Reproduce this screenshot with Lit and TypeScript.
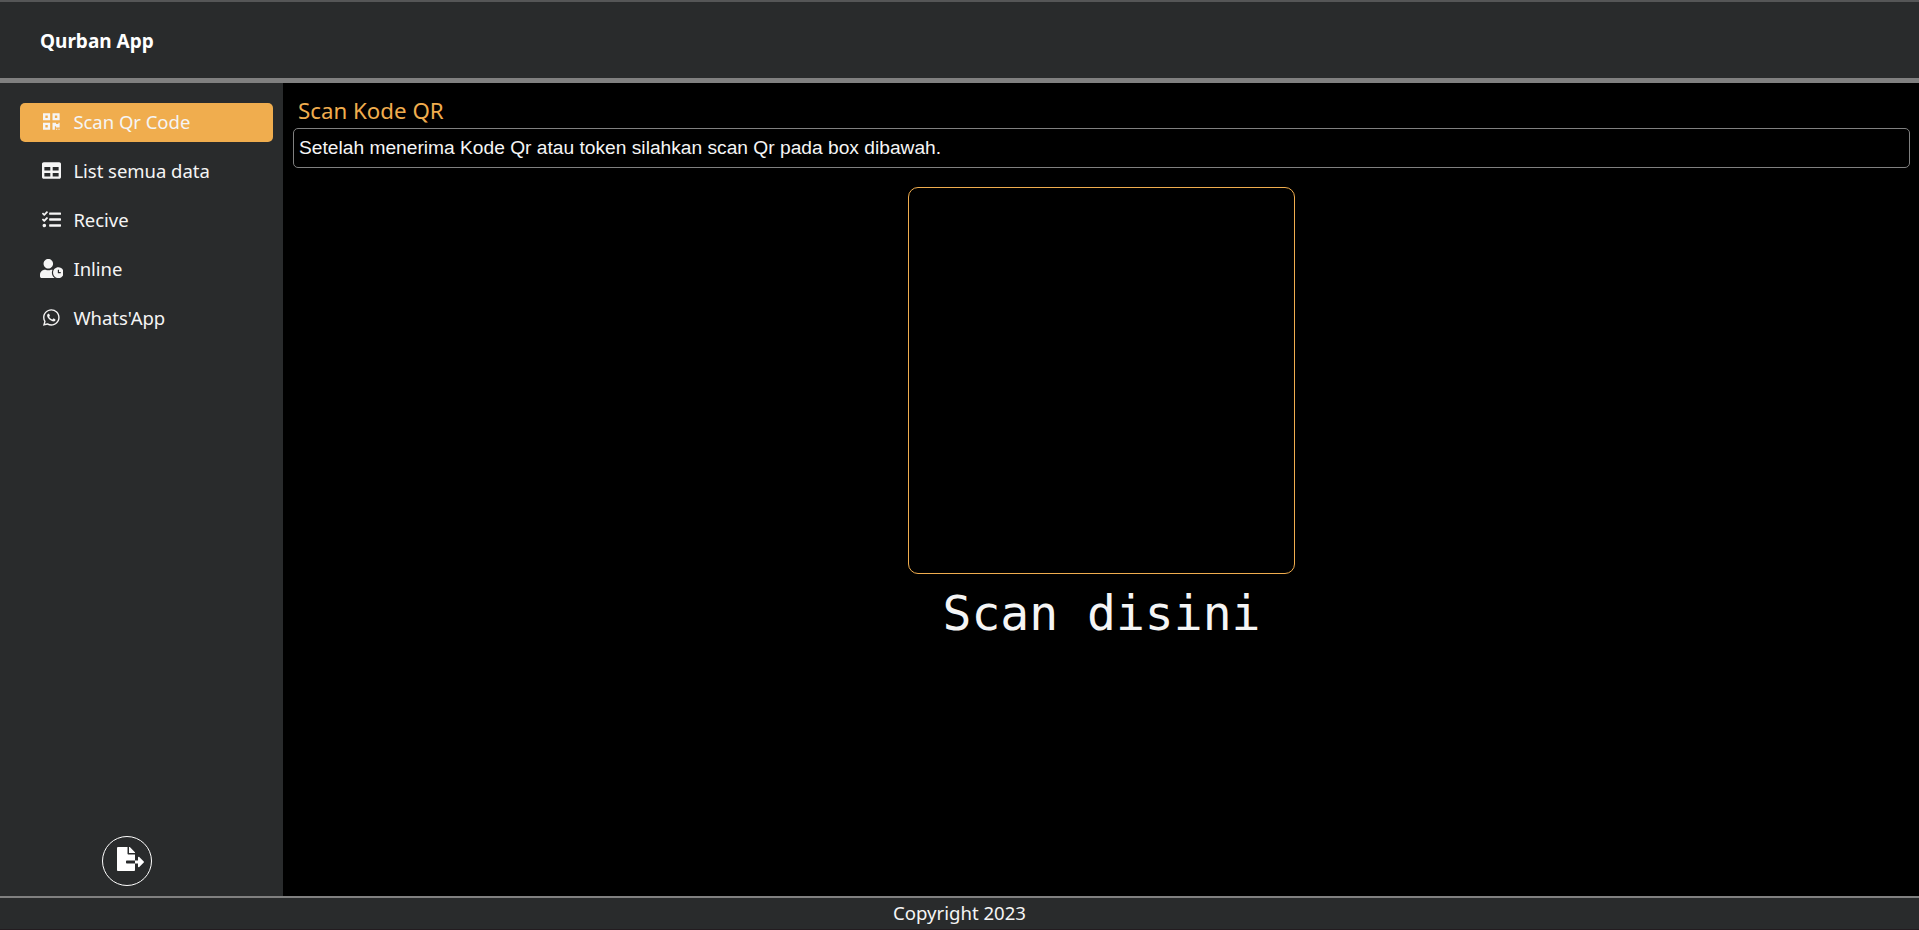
import { LitElement, html, css, svg } from "lit";
import { customElement, state } from "lit/decorators.js";
import { classMap } from "lit/directives/class-map.js";

interface NavItem {
  label: string;
  width: number;
  path: string;
}

const NAV: NavItem[] = [
  {
    label: "Scan Qr Code",
    width: 448,
    path: "M0 224h192V32H0v192zM64 96h64v64H64V96zm192-64v192h192V32H256zm128 128h-64V96h64v64zM0 480h192V288H0v192zm64-128h64v64H64v-64zm352-64h32v128h-96v-32h-32v96h-64V288h96v32h64v-32zm0 160h32v32h-32v-32zm-64 0h32v32h-32v-32z",
  },
  {
    label: "List semua data",
    width: 512,
    path: "M464 32H48C21.49 32 0 53.49 0 80v352c0 26.51 21.49 48 48 48h416c26.51 0 48-21.49 48-48V80c0-26.51-21.49-48-48-48zM224 416H64v-96h160v96zm0-160H64v-96h160v96zm224 160H288v-96h160v96zm0-160H288v-96h160v96z",
  },
  {
    label: "Recive",
    width: 512,
    path: "M139.61 35.5a12 12 0 0 0-17 0L58.93 98.81l-22.7-22.12a12 12 0 0 0-17 0L3.53 92.41a12 12 0 0 0 0 17l47.59 47.4a12.78 12.78 0 0 0 17.61 0l15.59-15.62L156.52 69a12.09 12.09 0 0 0 .09-17zm0 159.19a12 12 0 0 0-17 0l-63.68 63.72-22.7-22.1a12 12 0 0 0-17 0L3.53 252a12 12 0 0 0 0 17L51 316.5a12.77 12.77 0 0 0 17.6 0l15.7-15.69 72.2-72.22a12 12 0 0 0 .09-16.9zM64 368c-26.49 0-48.59 21.5-48.59 48S37.53 464 64 464a48 48 0 0 0 0-96zm432 16H208a16 16 0 0 0-16 16v32a16 16 0 0 0 16 16h288a16 16 0 0 0 16-16v-32a16 16 0 0 0-16-16zm0-320H208a16 16 0 0 0-16 16v32a16 16 0 0 0 16 16h288a16 16 0 0 0 16-16V80a16 16 0 0 0-16-16zm0 160H208a16 16 0 0 0-16 16v32a16 16 0 0 0 16 16h288a16 16 0 0 0 16-16v-32a16 16 0 0 0-16-16z",
  },
  {
    label: "Inline",
    width: 640,
    path: "M496 224c-79.6 0-144 64.4-144 144s64.4 144 144 144 144-64.4 144-144-64.4-144-144-144zm64 150.3c0 5.3-4.4 9.7-9.7 9.7h-60.6c-5.3 0-9.7-4.4-9.7-9.7v-76.6c0-5.3 4.4-9.7 9.7-9.7h12.6c5.3 0 9.7 4.4 9.7 9.7V352h38.3c5.3 0 9.7 4.4 9.7 9.7v12.6zM320 368c0-27.8 6.7-54.1 18.2-77.5-8-1.5-16.2-2.5-24.6-2.5h-16.7c-22.2 10.2-46.9 16-72.9 16s-50.6-5.8-72.9-16h-16.7C60.2 288 0 348.2 0 422.4V464c0 26.5 21.5 48 48 48h347.1c-45.3-31.9-75.1-84.5-75.1-144zm-96-112c70.7 0 128-57.3 128-128S294.7 0 224 0 96 57.3 96 128s57.3 128 128 128z",
  },
  {
    label: "Whats'App",
    width: 448,
    path: "M380.9 97.1C339 55.1 283.2 32 223.9 32c-122.4 0-222 99.6-222 222 0 39.1 10.2 77.3 29.6 111L0 480l117.7-30.9c32.4 17.7 68.9 27 106.1 27h.1c122.3 0 224.1-99.6 224.1-222 0-59.3-25.2-115-67.1-157zm-157 341.6c-33.2 0-65.7-8.9-94-25.7l-6.7-4-69.8 18.3L72 359.2l-4.4-7c-18.5-29.4-28.2-63.3-28.2-98.2 0-101.7 82.8-184.5 184.6-184.5 49.3 0 95.6 19.2 130.4 54.1 34.8 34.9 56.2 81.2 56.1 130.5 0 101.8-84.9 184.6-186.6 184.6zm101.2-138.2c-5.5-2.8-32.8-16.2-37.9-18-5.1-1.9-8.8-2.8-12.5 2.8-3.7 5.6-14.3 18-17.6 21.8-3.2 3.7-6.5 4.2-12 1.4-32.6-16.3-54-29.1-75.5-66-5.7-9.8 5.7-9.1 16.3-30.3 1.8-3.7.9-6.9-.5-9.7-1.4-2.8-12.5-30.1-17.1-41.2-4.5-10.8-9.1-9.3-12.5-9.5-3.2-.2-6.9-.2-10.6-.2-3.7 0-9.7 1.4-14.8 6.9-5.1 5.6-19.4 19-19.4 46.3 0 27.3 19.9 53.7 22.6 57.4 2.8 3.7 39.1 59.7 94.8 83.8 35.2 15.2 49 16.5 66.6 13.9 10.7-1.6 32.8-13.4 37.4-26.4 4.6-13 4.6-24.1 3.2-26.4-1.3-2.5-5-3.9-10.5-6.6z",
  },
];

const EXPORT_ICON =
  "M384 121.9c0-6.3-2.5-12.4-7-16.9L279.1 7c-4.5-4.5-10.6-7-17-7H256v128h128zM571 308l-95.7-96.4c-10.1-10.1-27.4-3-27.4 11.3V288h-64v64h64v65.2c0 14.3 17.3 21.4 27.4 11.3L571 332c6.6-6.6 6.6-17.4 0-24zm-379 28v-32c0-8.8 7.2-16 16-16h176V160H248c-13.2 0-24-10.8-24-24V0H24C10.7 0 0 10.7 0 24v464c0 13.3 10.7 24 24 24h336c13.3 0 24-10.7 24-24V352H208c-8.8 0-16-7.2-16-16z";

@customElement("nav-menu")
export class NavMenu extends LitElement {
  @state() private active = 0;

  static styles = css`
    :host {
      display: flex;
      flex-direction: column;
      gap: 10px;
    }
    .item {
      display: flex;
      align-items: center;
      box-sizing: border-box;
      height: 39px;
      padding: 0 19.4px;
      border-radius: 5px;
      color: #f5f5f5;
      cursor: pointer;
    }
    .item.active {
      background: #f0ad4e;
    }
    .icon {
      display: flex;
      justify-content: center;
      width: 24px;
      margin-right: 10px;
      padding-bottom: 2px;
    }
    .icon svg {
      display: block;
      flex: none;
      height: 19px;
      fill: currentColor;
    }
    .label {
      padding-bottom: 1px;
      font-size: 18.5px;
      letter-spacing: -0.03px;
      line-height: 26px;
      white-space: nowrap;
    }
  `;

  render() {
    return NAV.map(
      (item, i) => html`
        <a
          class=${classMap({ item: true, active: i === this.active })}
          @click=${() => (this.active = i)}
        >
          <span class="icon">
            <svg viewBox="0 0 ${item.width} 512">${svg`<path d=${item.path}></path>`}</svg>
          </span>
          <span class="label">${item.label}</span>
        </a>
      `
    );
  }
}

@customElement("app-root")
export class AppRoot extends LitElement {
  static styles = css`
    :host {
      display: grid;
      grid-template-rows: 83px 1fr 34px;
      box-sizing: border-box;
      height: 930px;
      background: #000;
      color: #f5f5f5;
      font-family: "Noto Sans", sans-serif;
    }
    header {
      display: flex;
      align-items: center;
      box-sizing: border-box;
      padding: 2px 0 0 40px;
      background: #292b2c;
      border-top: 2px solid #555657;
      border-bottom: 5px solid #808080;
    }
    .brand {
      color: #fff;
      font-size: 19px;
      font-weight: 700;
      line-height: 26px;
    }
    .body {
      display: grid;
      grid-template-columns: 283px 1fr;
      min-height: 0;
    }
    aside {
      display: flex;
      flex-direction: column;
      justify-content: space-between;
      box-sizing: border-box;
      padding: 20px 10px 10px 20px;
      background: #292b2c;
    }
    .logout {
      display: flex;
      align-items: center;
      justify-content: center;
      box-sizing: border-box;
      width: 50px;
      height: 50px;
      margin-left: 82px;
      padding: 0 0 4px 6px;
      border: 1px solid #fff;
      border-radius: 50%;
      background: none;
      color: #fff;
    }
    .logout svg {
      flex: none;
      display: block;
      width: 27px;
      height: 24px;
      fill: currentColor;
    }
    main {
      display: flex;
      flex-direction: column;
      box-sizing: border-box;
      padding: 12px 9px 0 10px;
    }
    h1 {
      margin: 0;
      padding-left: 5px;
      height: 33px;
      color: #f0ad4e;
      font-size: 22.3px;
      font-weight: 400;
      line-height: 31px;
    }
    .note {
      box-sizing: border-box;
      height: 40px;
      padding-left: 5px;
      border: 1px solid #808080;
      border-radius: 5px;
      font: 19.2px/38px "Liberation Sans", Arial, sans-serif;
    }
    .scanner {
      align-self: center;
      box-sizing: border-box;
      width: 387px;
      height: 387px;
      margin-top: 19px;
      border: 1px solid #f0ad4e;
      border-radius: 10px;
    }
    .caption {
      margin-top: 11px;
      text-align: center;
      font: 48px/56px "DejaVu Sans Mono", monospace;
    }
    footer {
      box-sizing: border-box;
      background: #292b2c;
      border-top: 2px solid #808080;
      border-bottom: 1px solid #231c20;
      text-align: center;
      font-size: 18.6px;
      line-height: 29px;
    }
  `;

  render() {
    return html`
      <header><span class="brand">Qurban App</span></header>
      <div class="body">
        <aside>
          <nav-menu></nav-menu>
          <button class="logout" aria-label="Logout">
            <svg viewBox="0 0 576 512"><path d=${EXPORT_ICON}></path></svg>
          </button>
        </aside>
        <main>
          <h1>Scan Kode QR</h1>
          <div class="note">
            Setelah menerima Kode Qr atau token silahkan scan Qr pada box dibawah.
          </div>
          <div class="scanner"></div>
          <div class="caption">Scan disini</div>
        </main>
      </div>
      <footer>Copyright 2023</footer>
    `;
  }
}
